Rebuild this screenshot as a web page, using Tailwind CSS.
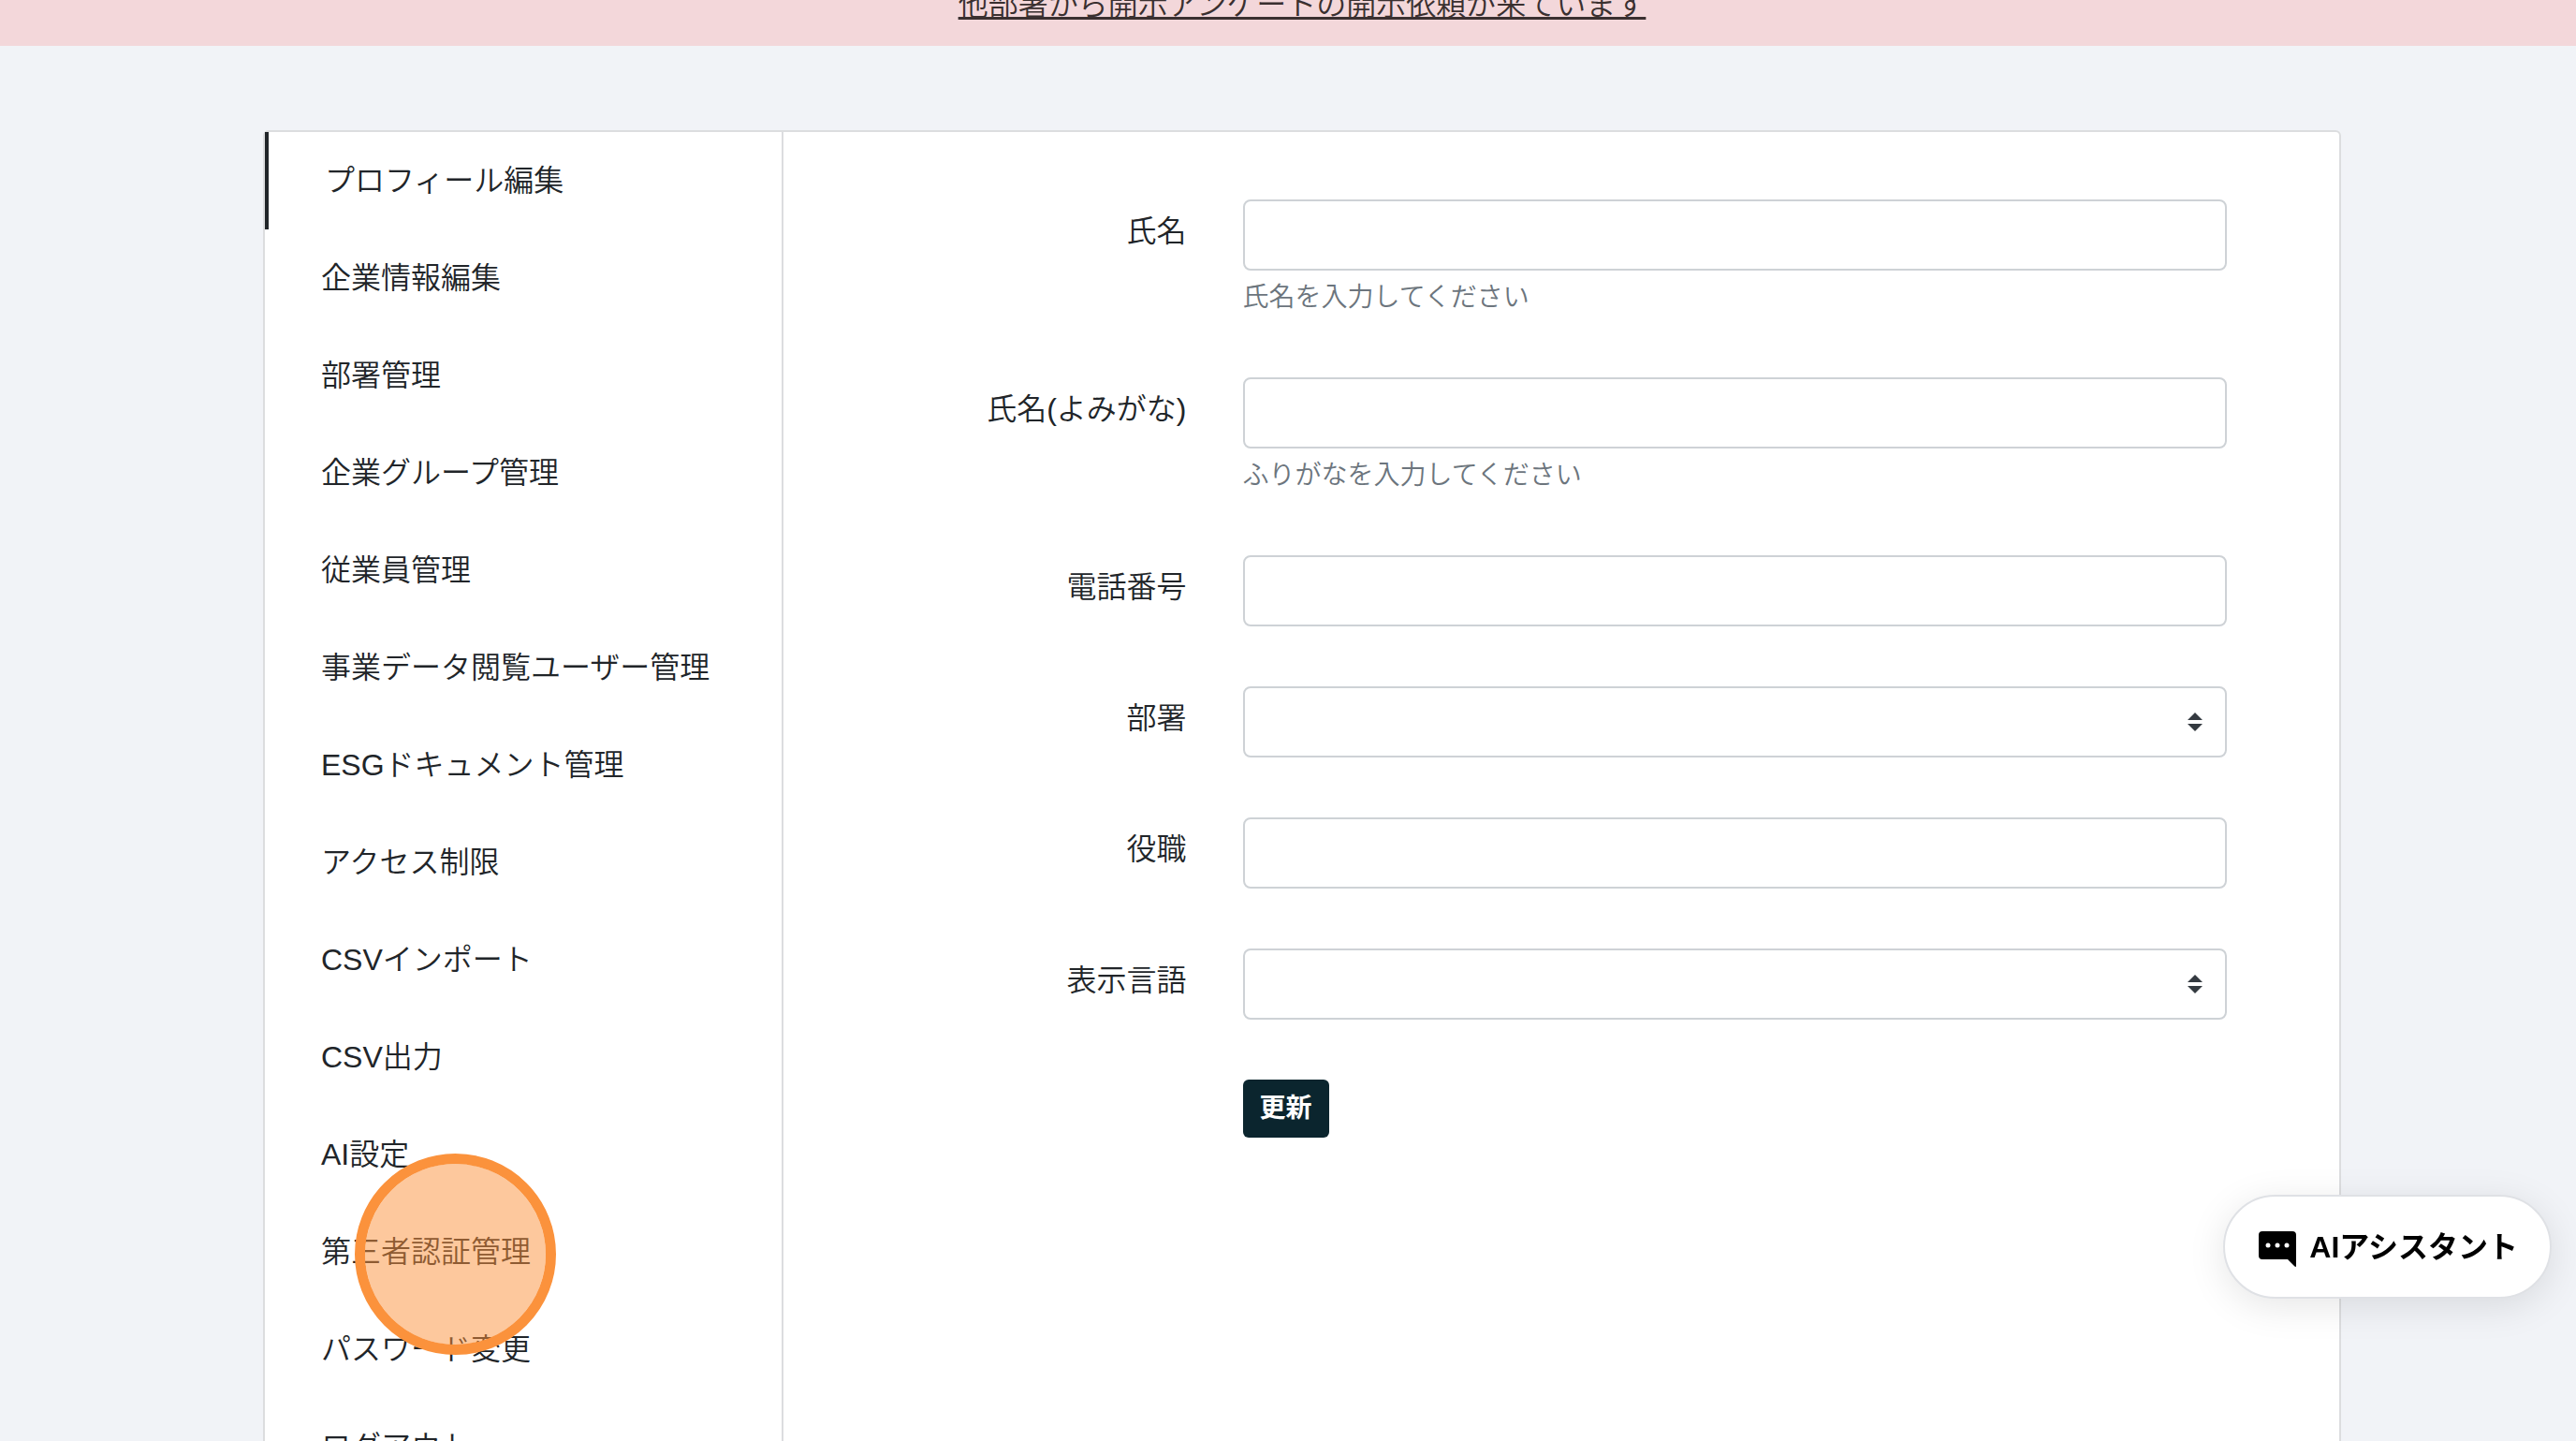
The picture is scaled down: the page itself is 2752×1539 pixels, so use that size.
<!DOCTYPE html>
<html lang="ja">
  <head>
    <meta charset="UTF-8" />
    <meta name="viewport" content="width=device-width, initial-scale=1.0" />
    <title>プロフィール編集</title>
    <!-- Tailwind CSS CDN -->
    <script src="https://cdn.jsdelivr.net/npm/@tailwindcss/browser@4"></script>
  </head>
  <body
    class="h-screen overflow-hidden bg-[#f1f3f7] font-['Liberation_Sans','Noto_Sans_CJK_JP',sans-serif] text-[32px] leading-[48px] font-[350] text-[#212529]"
  >
    <!-- Notice -->
    <div
      class="flex h-[49px] items-end justify-center overflow-hidden bg-[#f3d7da] pb-5 pl-[30px]"
    >
      <a
        href="#"
        class="text-[#3a3030] underline decoration-[3px] underline-offset-2 [text-decoration-skip-ink:none]"
        >他部署から開示アンケートの開示依頼が来ています</a
      >
    </div>

    <main class="pt-[90px] pl-[30px]">
      <div
        class="mx-auto flex w-full max-w-[2220px] rounded-md border-2 border-[#dcdddf] bg-white"
      >
        <!-- Sidebar -->
        <nav class="w-1/4 border-r-2 border-[#dcdddf] pb-24">
          <ul>
            <li>
              <a
                href="#"
                class="block border-l-4 border-[#212529] py-7 pl-[60px]"
                >プロフィール編集</a
              >
            </li>
            <li><a href="#" class="block py-7 pl-[60px]">企業情報編集</a></li>
            <li><a href="#" class="block py-7 pl-[60px]">部署管理</a></li>
            <li>
              <a href="#" class="block py-7 pl-[60px]">企業グループ管理</a>
            </li>
            <li><a href="#" class="block py-7 pl-[60px]">従業員管理</a></li>
            <li>
              <a href="#" class="block py-7 pl-[60px]"
                >事業データ閲覧ユーザー管理</a
              >
            </li>
            <li>
              <a href="#" class="block py-7 pl-[60px]">ESGドキュメント管理</a>
            </li>
            <li><a href="#" class="block py-7 pl-[60px]">アクセス制限</a></li>
            <li><a href="#" class="block py-7 pl-[60px]">CSVインポート</a></li>
            <li><a href="#" class="block py-7 pl-[60px]">CSV出力</a></li>
            <li><a href="#" class="block py-7 pl-[60px]">AI設定</a></li>
            <li class="relative">
              <a href="#" class="block py-7 pl-[60px]">第三者認証管理</a>
              <!-- Click marker -->
              <span
                class="pointer-events-none absolute -top-[53px] left-24 z-10 size-[215px] rounded-full border-[11px] border-[#fb923c] bg-[#fb923c]/50 bg-clip-padding"
              ></span>
            </li>
            <li><a href="#" class="block py-7 pl-[60px]">パスワード変更</a></li>
            <li><a href="#" class="block py-7 pl-[60px]">ログアウト</a></li>
          </ul>
        </nav>

        <!-- Profile form -->
        <form class="flex w-3/4 flex-col gap-16 px-[90px] pt-[72px]">
          <div class="flex">
            <label for="name" class="w-1/4 px-[30px] pt-2.5 text-right"
              >氏名</label
            >
            <div class="w-3/4 px-[30px]">
              <input
                id="name"
                type="text"
                class="block h-[76px] w-full rounded-lg border-2 border-[#ced2d6] bg-white px-6"
              />
              <p class="mt-2 text-[28px] leading-[42px] text-[#6c757d]">
                氏名を入力してください
              </p>
            </div>
          </div>
          <div class="flex">
            <label for="kana" class="w-1/4 px-[30px] pt-2.5 text-right"
              >氏名(よみがな)</label
            >
            <div class="w-3/4 px-[30px]">
              <input
                id="kana"
                type="text"
                class="block h-[76px] w-full rounded-lg border-2 border-[#ced2d6] bg-white px-6"
              />
              <p class="mt-2 text-[28px] leading-[42px] text-[#6c757d]">
                ふりがなを入力してください
              </p>
            </div>
          </div>
          <div class="flex">
            <label for="tel" class="w-1/4 px-[30px] pt-2.5 text-right"
              >電話番号</label
            >
            <div class="w-3/4 px-[30px]">
              <input
                id="tel"
                type="tel"
                class="block h-[76px] w-full rounded-lg border-2 border-[#ced2d6] bg-white px-6"
              />
            </div>
          </div>
          <div class="flex">
            <label for="department" class="w-1/4 px-[30px] pt-2.5 text-right"
              >部署</label
            >
            <div class="w-3/4 px-[30px]">
              <div class="relative">
                <select
                  id="department"
                  class="block h-[76px] w-full appearance-none rounded-lg border-2 border-[#ced2d6] bg-white px-6"
                >
                  <option></option>
                </select>
                <svg
                  class="pointer-events-none absolute top-7 right-[26px] h-5 w-4"
                  viewBox="0 0 4 5"
                  fill="#343a40"
                >
                  <path d="M2 0L0 2h4zm0 5L0 3h4z" />
                </svg>
              </div>
            </div>
          </div>
          <div class="flex">
            <label for="position" class="w-1/4 px-[30px] pt-2.5 text-right"
              >役職</label
            >
            <div class="w-3/4 px-[30px]">
              <input
                id="position"
                type="text"
                class="block h-[76px] w-full rounded-lg border-2 border-[#ced2d6] bg-white px-6"
              />
            </div>
          </div>
          <div class="flex">
            <label for="language" class="w-1/4 px-[30px] pt-2.5 text-right"
              >表示言語</label
            >
            <div class="w-3/4 px-[30px]">
              <div class="relative">
                <select
                  id="language"
                  class="block h-[76px] w-full appearance-none rounded-lg border-2 border-[#ced2d6] bg-white px-6"
                >
                  <option></option>
                </select>
                <svg
                  class="pointer-events-none absolute top-7 right-[26px] h-5 w-4"
                  viewBox="0 0 4 5"
                  fill="#343a40"
                >
                  <path d="M2 0L0 2h4zm0 5L0 3h4z" />
                </svg>
              </div>
            </div>
          </div>
          <div class="ml-[25%] px-[30px]">
            <button
              type="submit"
              class="block rounded-md bg-[#0b252e] px-[18px] py-2.5 text-[28px] leading-[42px] font-bold text-white"
            >
              更新
            </button>
          </div>
        </form>
      </div>
    </main>

    <!-- AI assistant -->
    <button
      type="button"
      class="fixed right-[26px] bottom-[152px] flex h-[111px] items-center gap-3.5 rounded-full border-2 border-[#dfe1e5] bg-white pr-[34px] pl-9 font-bold text-black shadow-[0_8px_40px_rgba(0,0,0,0.1)]"
    >
      <svg class="mt-1 h-[38px] w-10" viewBox="0 0 40 38">
        <path
          d="M4 0h32a4 4 0 0 1 4 4v33q0 1.500-1.500.5L31 30H4a4 4 0 0 1-4-4V4a4 4 0 0 1 4-4z"
        />
        <g fill="#fff">
          <circle cx="10" cy="15" r="2.500" />
          <circle cx="20" cy="15" r="2.500" />
          <circle cx="30" cy="15" r="2.500" />
        </g>
      </svg>
      AIアシスタント
    </button>
  </body>
</html>
